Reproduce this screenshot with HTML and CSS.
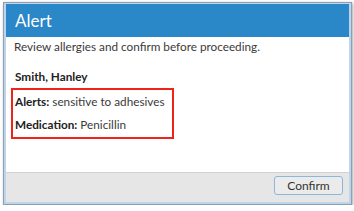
FILE: index.html
```html
<!DOCTYPE html>
<html lang="en">

<head>
    <meta charset="UTF-8">
    <title>Alert</title>
    <link rel="stylesheet" href="styles.css">
</head>

<body>
    <div class="dialog">
        <div class="dialog-frame">
            <div class="header">Alert</div>

            <div class="content">
                <p class="intro">Review allergies and confirm before proceeding.</p>
                <p class="patient">Smith, Hanley</p>

                <!-- highlighted patient info -->
                <div class="highlight">
                    <p class="row"><b>Alerts:</b> sensitive to adhesives</p>
                    <p class="row"><b>Medication:</b> Penicillin</p>
                </div>
            </div>

            <div class="footer">
                <button class="confirm">Confirm</button>
            </div>
        </div>
    </div>
</body>

</html>
```

FILE: styles.css
```css
body {
    margin: 0;
    background-color: white;
    font-family: Lato, "Liberation Sans", sans-serif;
    color: #3a3a3a;
}

p {
    margin: 0;
}

.dialog {
    width: 347px;
    margin: 2px 0 0 3px;
    border: 1px solid #8f9fb0;
    box-shadow: 1px 1px 3px rgba(0, 0, 0, 0.35);
}

.dialog-frame {
    padding: 1px 2px 2px 2px;
    background-color: #bcd5ec;
}

.header {
    height: 33px;
    padding-left: 9px;
    background-color: #2a87c8;
    color: white;
    font-size: 17px;
    line-height: 33px;
}

.content {
    height: 135px;
    padding: 0 5px;
    background-color: white;
    font-size: 11.75px;
}

.intro {
    padding-left: 3px;
    line-height: 20px;
}

.patient {
    margin-top: 10px;
    padding-left: 4px;
    line-height: 20px;
    font-weight: bold;
    color: #222;
}

.highlight {
    width: 157px;
    margin-top: 1px;
    padding: 0 0 1px 2px;
    border: 2px solid #f0231b;
}

.row {
    line-height: 23px;
}

.row b {
    color: #222;
}

.footer {
    display: flex;
    justify-content: flex-end;
    align-items: flex-start;
    height: 30px;
    padding: 3px 6px 0 0;
    box-sizing: border-box;
    border-top: 1px solid #d2d2d2;
    background-color: #e6e6e6;
}

.confirm {
    width: 69px;
    height: 19px;
    padding: 0;
    border: 1px solid #8db6dc;
    border-radius: 3px;
    background-color: #ebebeb;
    font-family: Lato, "Liberation Sans", sans-serif;
    font-size: 12px;
    color: #333;
}
```
